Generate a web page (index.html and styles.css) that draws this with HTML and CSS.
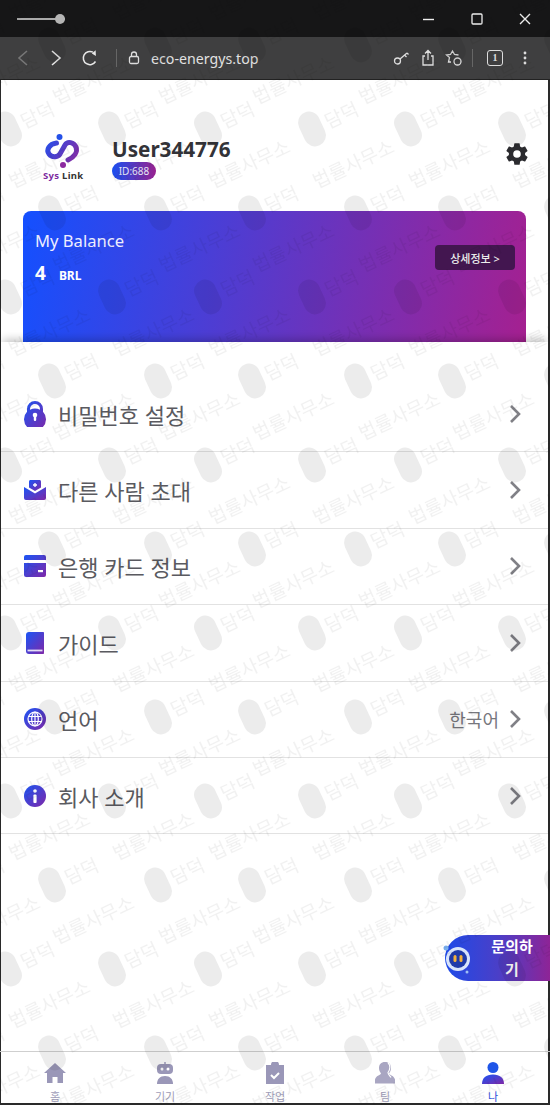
FILE: index.html
```html
<!DOCTYPE html>
<html lang="ko">
<head>
    <meta charset="UTF-8">
    <meta name="viewport" content="width=device-width, initial-scale=1.0">
    <title>eco-energys.top</title>
    <link rel="stylesheet" href="styles.css">
</head>
<body>
    <svg class="defs" width="0" height="0">
        <defs>
            <linearGradient id="brand" x1="0" y1="0" x2="1" y2="1">
                <stop offset="0" stop-color="#1a55f5"/>
                <stop offset="1" stop-color="#7f28a8"/>
            </linearGradient>
            <linearGradient id="brand-h" gradientUnits="userSpaceOnUse" x1="2" y1="8" x2="36" y2="30">
                <stop offset="0" stop-color="#1f50ee"/>
                <stop offset="1" stop-color="#8c2aa0"/>
            </linearGradient>
        </defs>
    </svg>

    <div class="window">
        <div class="titlebar">
            <div class="slider"><span class="slider-knob"></span></div>
            <div class="win-btns">
                <svg width="12" height="12" viewBox="0 0 12 12"><path d="M0 6.500h11" stroke="#eee" stroke-width="1.400"/></svg>
                <svg width="12" height="12" viewBox="0 0 12 12"><rect x="1" y="1" width="10" height="10" rx="1" fill="none" stroke="#eee" stroke-width="1.300"/></svg>
                <svg width="12" height="12" viewBox="0 0 12 12"><path d="M1 1l10 10M11 1L1 11" stroke="#eee" stroke-width="1.400"/></svg>
            </div>
        </div>

        <div class="toolbar">
            <svg class="tb-back" width="14" height="18" viewBox="0 0 14 18"><path d="M11 2L3 9l8 7" fill="none" stroke="#777" stroke-width="1.600"/></svg>
            <svg class="tb-fwd" width="14" height="18" viewBox="0 0 14 18"><path d="M3 2l8 7-8 7" fill="none" stroke="#e8e8e8" stroke-width="1.600"/></svg>
            <svg class="tb-reload" width="18" height="18" viewBox="0 0 18 18"><path d="M14.500 12.500A6.600 6.600 0 1 1 12 3.200" fill="none" stroke="#e8e8e8" stroke-width="1.500"/><path d="M12 6V1l4.500 3.500z" fill="#e8e8e8" transform="rotate(50 13 4)"/></svg>
            <span class="tb-sep"></span>
            <svg class="tb-lock" width="12" height="14" viewBox="0 0 12 14"><rect x="1.500" y="5.500" width="9" height="7" rx="1.500" fill="none" stroke="#ddd" stroke-width="1.300"/><path d="M3.500 5.500V3.500a2.500 2.500 0 0 1 5 0v2" fill="none" stroke="#ddd" stroke-width="1.300"/></svg>
            <span class="tb-url">eco-energys.top</span>
            <div class="tb-right">
                <svg width="18" height="16" viewBox="0 0 18 16"><circle cx="4.500" cy="11" r="3" fill="none" stroke="#ddd" stroke-width="1.300"/><path d="M7 9l7-6M11.500 5l2 2M14 3l1.500 1.500" fill="none" stroke="#ddd" stroke-width="1.300"/></svg>
                <svg width="16" height="18" viewBox="0 0 16 18"><path d="M5 7H3v9h10V7h-2M8 11V2M5 4.500L8 1.500l3 3" fill="none" stroke="#ddd" stroke-width="1.300"/></svg>
                <svg width="18" height="18" viewBox="0 0 18 18"><path d="M6 13H3.500l1-4.500L1.500 6l4-.5L7.500 2l2 3.500 4 .5" fill="none" stroke="#ddd" stroke-width="1.300"/><circle cx="12.500" cy="12.500" r="3.500" fill="none" stroke="#ddd" stroke-width="1.300"/></svg>
                <span class="tb-sep"></span>
                <span class="tb-tabs">1</span>
                <svg width="4" height="14" viewBox="0 0 4 14"><circle cx="2" cy="2" r="1.400" fill="#ddd"/><circle cx="2" cy="7" r="1.400" fill="#ddd"/><circle cx="2" cy="12" r="1.400" fill="#ddd"/></svg>
            </div>
        </div>

        <div class="page">
            <div class="profile">
                <div class="logo">
                    <svg width="38" height="37" viewBox="0 0 38 37">
                        <circle cx="16.500" cy="5" r="3" fill="#2450e8"/>
                        <path d="M13.500 12C6 13 3 19 6 23c3 4 8.500 3.500 11 0l5-9c2.500-4 9-3 11 2 2 5-2 10-8 13" fill="none" stroke="url(#brand-h)" stroke-width="5" stroke-linecap="round" transform="translate(0 -1)"/>
                        <circle cx="20" cy="33" r="3" fill="#8c2aa0"/>
                    </svg>
                    <div class="logo-text"><span class="logo-sys">Sys</span> Link</div>
                </div>
                <div class="who">
                    <div class="who-name">User344776</div>
                    <span class="who-id">ID:688</span>
                </div>
                <svg class="gear" width="26" height="26" viewBox="0 0 24 24"><path fill="#2b2b2f" d="M19.400 13c.04-.33.1-.66.1-1s-.06-.67-.1-1l2.100-1.650c.2-.15.24-.42.12-.64l-2-3.460c-.12-.22-.39-.3-.61-.22l-2.490 1c-.52-.4-1.080-.73-1.690-.98l-.38-2.650A.49.49 0 0 0 14 2h-4c-.25 0-.46.18-.49.42l-.38 2.650c-.61.25-1.170.59-1.690.98l-2.490-1c-.23-.09-.49 0-.61.22l-2 3.460c-.13.22-.07.49.12.64L4.570 11c-.04.33-.07.66-.07 1s.03.67.07 1l-2.110 1.650c-.19.15-.25.42-.12.64l2 3.460c.12.22.39.3.61.22l2.490-1c.52.4 1.080.73 1.690.98l.38 2.650c.03.24.24.42.49.42h4c.25 0 .46-.18.49-.42l.38-2.650c.61-.25 1.170-.59 1.690-.98l2.490 1c.23.09.49 0 .61-.22l2-3.460c.12-.22.07-.49-.12-.64zM12 15.500a3.500 3.500 0 1 1 0-7 3.500 3.500 0 0 1 0 7z"/></svg>
            </div>

            <div class="balance">
                <div class="balance-info">
                    <div class="balance-title">My Balance</div>
                    <div class="balance-amount"><b>4</b><span>BRL</span></div>
                </div>
                <button class="balance-btn">상세정보 &gt;</button>
            </div>

            <div class="menu">
                <div class="menu-row">
                    <svg class="menu-icon" width="22" height="26" viewBox="0 0 22 26"><path fill="url(#brand)" d="M11 0a8 8 0 0 0-8 8v2.800a11 11 0 1 0 16 0V8a8 8 0 0 0-8-8zm0 3a5 5 0 0 1 5 5v.8a11 11 0 0 0-10 0V8a5 5 0 0 1 5-5z"/><circle cx="11" cy="14" r="2.300" fill="#fff"/><rect x="9.800" y="14" width="2.400" height="6" rx="1" fill="#fff"/></svg>
                    <span class="menu-label">비밀번호 설정</span>
                    <svg class="chev" width="12" height="20" viewBox="0 0 12 20"><path d="M2 2l8 8-8 8" fill="none" stroke="#808086" stroke-width="2.600"/></svg>
                </div>
                <div class="menu-row">
                    <svg class="menu-icon" width="22" height="20" viewBox="0 0 22 20"><path fill="url(#brand)" d="M5 7.500V1.500C5 .7 5.700 0 6.500 0h9c.8 0 1.500.7 1.500 1.500v6l-6 3.500z"/><path fill="url(#brand)" d="M0 7l11 6.500L22 7v11a2 2 0 0 1-2 2H2a2 2 0 0 1-2-2z"/><path d="M9 5h4M11 3v4" stroke="#fff" stroke-width="1.300"/></svg>
                    <span class="menu-label">다른 사람 초대</span>
                    <svg class="chev" width="12" height="20" viewBox="0 0 12 20"><path d="M2 2l8 8-8 8" fill="none" stroke="#808086" stroke-width="2.600"/></svg>
                </div>
                <div class="menu-row">
                    <svg class="menu-icon" width="22" height="22" viewBox="0 0 22 22"><path fill="url(#brand)" d="M2 0h18a2 2 0 0 1 2 2v3H0V2a2 2 0 0 1 2-2zM0 8h22v12a2 2 0 0 1-2 2H2a2 2 0 0 1-2-2z"/><rect x="14" y="15" width="5" height="2.200" fill="#fff"/></svg>
                    <span class="menu-label">은행 카드 정보</span>
                    <svg class="chev" width="12" height="20" viewBox="0 0 12 20"><path d="M2 2l8 8-8 8" fill="none" stroke="#808086" stroke-width="2.600"/></svg>
                </div>
                <div class="menu-row">
                    <svg class="menu-icon" width="22" height="22" viewBox="0 0 22 22"><path fill="url(#brand)" d="M5 0h14c.6 0 1 .4 1 1v20c0 .6-.4 1-1 1H5a3 3 0 0 1-3-3V3a3 3 0 0 1 3-3z"/><path d="M3.500 18.500h15" stroke="#e4ddf5" stroke-width="1.800"/></svg>
                    <span class="menu-label">가이드</span>
                    <svg class="chev" width="12" height="20" viewBox="0 0 12 20"><path d="M2 2l8 8-8 8" fill="none" stroke="#808086" stroke-width="2.600"/></svg>
                </div>
                <div class="menu-row">
                    <svg class="menu-icon" width="22" height="22" viewBox="0 0 22 22"><circle cx="11" cy="11" r="11" fill="url(#brand)"/><g fill="none" stroke="#fff" stroke-width="1.200"><circle cx="11" cy="11" r="7"/><ellipse cx="11" cy="11" rx="3.300" ry="7"/><path d="M11 4v14M4.600 8.500h12.800M4.600 13.500h12.800"/></g></svg>
                    <span class="menu-label">언어</span>
                    <span class="menu-value">한국어</span>
                    <svg class="chev" width="12" height="20" viewBox="0 0 12 20"><path d="M2 2l8 8-8 8" fill="none" stroke="#808086" stroke-width="2.600"/></svg>
                </div>
                <div class="menu-row">
                    <svg class="menu-icon" width="22" height="22" viewBox="0 0 22 22"><circle cx="11" cy="11" r="11" fill="url(#brand)"/><circle cx="11" cy="6" r="1.800" fill="#fff"/><rect x="9.400" y="9.500" width="3.200" height="8.500" rx="1" fill="#fff"/></svg>
                    <span class="menu-label">회사 소개</span>
                    <svg class="chev" width="12" height="20" viewBox="0 0 12 20"><path d="M2 2l8 8-8 8" fill="none" stroke="#808086" stroke-width="2.600"/></svg>
                </div>
            </div>

            <div class="tabbar">
                <div class="tab">
                    <svg width="22" height="22" viewBox="0 0 22 22"><path fill="#9a97b8" d="M11 1L0 11h3v10h5.500v-6h5v6H19V11h3z"/></svg>
                    <span>홈</span>
                </div>
                <div class="tab">
                    <svg width="22" height="22" viewBox="0 0 22 22"><rect x="10.300" y="0" width="1.400" height="3" fill="#9a97b8"/><rect x="3" y="2" width="16" height="10" rx="4" fill="#9a97b8"/><circle cx="8" cy="7" r="1.500" fill="#fff"/><circle cx="14" cy="7" r="1.500" fill="#fff"/><path fill="#9a97b8" d="M3 22c0-5 3-8 8-8s8 3 8 8z"/></svg>
                    <span>기기</span>
                </div>
                <div class="tab">
                    <svg width="22" height="22" viewBox="0 0 22 22"><path fill="#9a97b8" d="M2 3h5a4 4 0 0 1 8 0h5v19H2z"/><path d="M7 13l3 3 5-5" fill="none" stroke="#fff" stroke-width="2"/></svg>
                    <span>작업</span>
                </div>
                <div class="tab">
                    <svg width="22" height="22" viewBox="0 0 22 22"><path fill="#a9a6c2" d="M11 0c4 0 6 2.500 6 6 0 2.500-1 4-2 5.500 1 2 5 2 6 6v4H1v-4c1-4 5-4 6-6C6 10 5 8.500 5 6c0-3.500 2-6 6-6z"/><path d="M14 1c2.500 2 2.500 6 0 9.500 0 2 2 3.500 3 5" fill="none" stroke="#fff" stroke-width="1.200"/></svg>
                    <span>팀</span>
                </div>
                <div class="tab tab-on">
                    <svg width="22" height="22" viewBox="0 0 22 22"><circle cx="11" cy="5.500" r="5.500" fill="#1f55e8"/><path fill="url(#brand)" d="M0 22c0-6 4-9.500 11-9.500S22 16 22 22z"/></svg>
                    <span>나</span>
                </div>
            </div>

            <div class="help">
                <svg class="help-bot" width="36" height="36" viewBox="0 0 36 36">
                    <circle cx="7" cy="8" r="2.500" fill="#7ab0f0"/>
                    <circle cx="19" cy="19" r="12" fill="#d8e4fb"/>
                    <circle cx="19" cy="19" r="9" fill="#1f3aa8"/>
                    <rect x="14.500" y="15" width="3" height="7" rx="1.500" fill="#f3b23c"/>
                    <rect x="20.500" y="15" width="3" height="7" rx="1.500" fill="#f3b23c"/>
                    <circle cx="28" cy="32" r="1.500" fill="#9fc0f5"/>
                </svg>
                <span class="help-text">문의하기</span>
            </div>
        </div>
    </div>

    <svg class="watermark" width="100%" height="100%">
        <defs>
            <g id="wm-mark">
                <g transform="rotate(-25)">
                    <rect x="-11" y="-18" width="22" height="36" rx="11" fill="#000" opacity=".075"/>
                    <text x="15" y="7" class="wm-text">담덕</text>
                    <text x="-21" y="56" class="wm-text">법률사무소</text>
                </g>
            </g>
            <g id="wm-tile">
                <use href="#wm-mark" x="8" y="129"/>
                <use href="#wm-mark" x="112" y="129"/>
                <use href="#wm-mark" x="52" y="45"/>
                <use href="#wm-mark" x="158" y="45"/>
            </g>
            <pattern id="wm" width="200" height="168" patternUnits="userSpaceOnUse">
                <use href="#wm-tile" x="-200" y="-168"/>
                <use href="#wm-tile" x="0" y="-168"/>
                <use href="#wm-tile" x="200" y="-168"/>
                <use href="#wm-tile" x="-200" y="0"/>
                <use href="#wm-tile" x="0" y="0"/>
                <use href="#wm-tile" x="200" y="0"/>
                <use href="#wm-tile" x="-200" y="168"/>
                <use href="#wm-tile" x="0" y="168"/>
                <use href="#wm-tile" x="200" y="168"/>
            </pattern>
        </defs>
        <rect width="100%" height="100%" fill="url(#wm)"/>
    </svg>
</body>
</html>
```

FILE: styles.css
```css
* {
    padding: 0;
    margin: 0;
    box-sizing: border-box;
}
html, body {
    height: 1105px;
    overflow: hidden;
}
body {
    position: relative;
    background-color: #fff;
    font-family: "Noto Sans", "Noto Sans CJK KR", sans-serif;
}
.defs {
    position: absolute;
}
.window {
    height: 1105px;
    display: flex;
    flex-direction: column;
    border-left: 1px solid #2a2a2a;
    border-right: 2px solid #2a2a2a;
    border-bottom: 2px solid #2a2a2a;
}

/* browser chrome */
.titlebar {
    height: 37px;
    margin-left: -1px;
    margin-right: -2px;
    background-color: #161617;
    display: flex;
    align-items: center;
    justify-content: space-between;
    padding: 0 19px 0 17px;
}
.slider {
    width: 48px;
    height: 2px;
    background-color: #aaa;
    position: relative;
}
.slider-knob {
    position: absolute;
    right: 0;
    top: -4px;
    width: 10px;
    height: 10px;
    border-radius: 50%;
    background-color: #b5b5b5;
}
.win-btns {
    display: flex;
    gap: 36px;
}
.toolbar {
    height: 43px;
    margin-left: -1px;
    margin-right: -2px;
    background-color: #3f3f40;
    display: flex;
    align-items: center;
    padding-left: 16px;
    padding-right: 23px;
    border-bottom: 1px solid #222;
}
.tb-fwd {
    margin-left: 19px;
}
.tb-reload {
    margin-left: 18px;
}
.toolbar > .tb-sep {
    margin-left: 17px;
}
.tb-sep {
    width: 1px;
    height: 18px;
    background-color: #666;
}
.tb-lock {
    margin-left: 11px;
}
.tb-url {
    margin-left: 11px;
    color: #e2e2e2;
    font-size: 14.2px;
}
.tb-right {
    margin-left: auto;
    display: flex;
    align-items: center;
    gap: 9px;
}
.tb-tabs {
    width: 16px;
    height: 16px;
    border: 1.5px solid #ddd;
    border-radius: 3px;
    color: #ddd;
    font: bold 10px/13px "Liberation Serif", serif;
    text-align: center;
    margin-left: 5px;
    margin-right: 11px;
}

/* page */
.page {
    flex: 1;
    display: flex;
    flex-direction: column;
    position: relative;
    min-height: 0;
}
.profile {
    display: flex;
    padding: 52px 18px 0 42px;
    height: 131px;
}
.logo {
    width: 38px;
    height: 47px;
}
.logo svg {
    display: block;
}
.logo-text {
    font-size: 9.5px;
    font-weight: 700;
    color: #333;
    line-height: 13px;
    white-space: nowrap;
    letter-spacing: .3px;
}
.logo-sys {
    color: #7d2ba0;
}
.who {
    margin-left: 31px;
    margin-top: 4px;
}
.who-name {
    font-size: 20.7px;
    font-weight: 700;
    color: #333338;
    line-height: 26px;
}
.who-id {
    display: block;
    width: 44px;
    height: 18px;
    border-radius: 9px;
    background: linear-gradient(90deg, #1a4ff0, #98218f);
    color: #e8e8f8;
    font-size: 10px;
    line-height: 18px;
    text-align: center;
}
.gear {
    margin-left: auto;
    margin-top: 9px;
}
.balance {
    height: 131px;
    margin: 0 22px;
    border-radius: 8px 8px 0 0;
    background: linear-gradient(100deg, #1450ff, #a52090);
    display: flex;
    justify-content: space-between;
    padding: 18px 11px 0 12px;
    color: #fff;
}
.balance-title {
    font-size: 16.6px;
    line-height: 24px;
    color: #eef;
}
.balance-amount {
    margin-top: 8px;
    line-height: 24px;
}
.balance-amount b {
    font-size: 19px;
}
.balance-amount span {
    font-size: 12px;
    font-weight: 700;
    margin-left: 13px;
}
.balance-btn {
    align-self: flex-start;
    margin-top: 16px;
    width: 80px;
    height: 25px;
    border: none;
    border-radius: 4px;
    background-color: #431650;
    color: #eee;
    font-family: inherit;
    font-size: 11px;
    font-weight: 500;
}
.menu {
    background-color: #fff;
    padding-top: 34px;
    position: relative;
    box-shadow: 0 -5px 8px -2px rgba(0, 0, 0, .22);
}
.menu-row {
    height: 76.4px;
    display: flex;
    align-items: center;
    border-bottom: 1px solid #e2e2e2;
    padding: 0 27px 0 23px;
}
.menu-icon {
    flex: none;
}
.menu-label {
    position: absolute;
    left: 57px;
    font-size: 22px;
    color: #5a5a60;
}
.menu-value {
    margin-left: auto;
    margin-right: 10px;
    font-size: 18px;
    color: #77777d;
}
.chev {
    margin-left: auto;
}
.menu-value + .chev {
    margin-left: 0;
}
.tabbar {
    margin-top: auto;
    height: 52px;
    border-top: 1px solid #cfcfcf;
    display: grid;
    grid-template-columns: repeat(5, 1fr);
    margin-right: -2px;
    margin-left: -1px;
}
.tab {
    display: flex;
    flex-direction: column;
    align-items: center;
    padding-top: 10px;
    color: #a09db8;
    font-size: 11px;
    line-height: 14px;
    gap: 6px;
}
.tab svg {
    flex: none;
}
.tab-on {
    color: #2c4fd8;
    transform: translateX(-2px);
}

/* floating help button */
.help {
    position: absolute;
    right: -2px;
    bottom: 122px;
    width: 105px;
    height: 46px;
    border-radius: 23px 0 0 23px;
    background: linear-gradient(90deg, #1e4ae8, #4a3fc8 50%, #8e2496);
    display: flex;
    align-items: center;
}
.help-bot {
    margin-left: -6px;
    flex: none;
}
.help-text {
    width: 52px;
    margin-left: 11px;
    color: #fff;
    font-size: 15px;
    font-weight: 700;
    line-height: 23px;
    text-align: center;
    word-break: break-all;
}

/* document watermark */
.watermark {
    position: absolute;
    left: 0;
    top: 0;
    pointer-events: none;
}
.wm-text {
    font-family: "Noto Sans CJK KR", sans-serif;
    font-size: 19px;
    fill: #000;
    fill-opacity: .055;
}
```
